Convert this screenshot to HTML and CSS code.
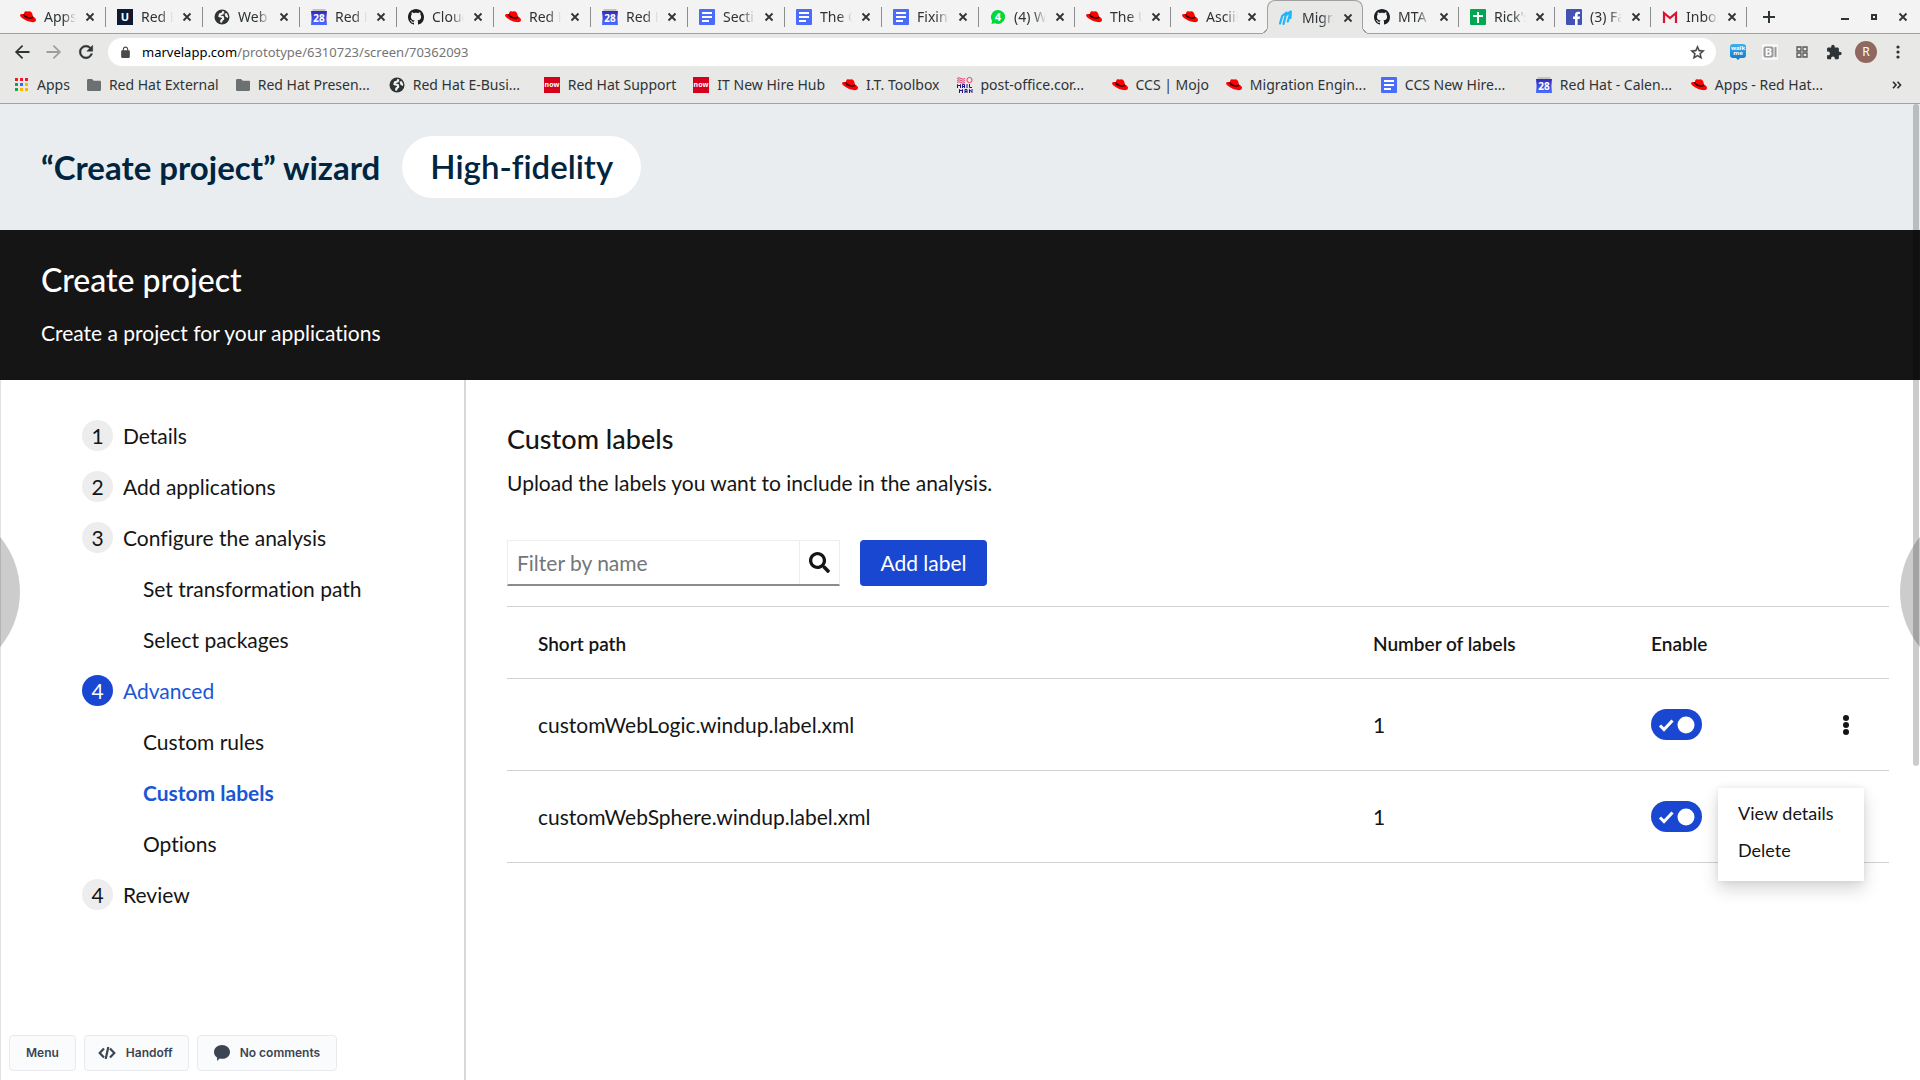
FILE: index.html
```html
<!DOCTYPE html>
<html lang="en">
<head>
<meta charset="utf-8">
<meta name="viewport" content="width=device-width, initial-scale=1">
<title>Create project wizard</title>
<link rel="stylesheet" href="styles.css">
</head>
<body>
<svg class="sprite" aria-hidden="true">
  <defs>
    <linearGradient id="cal-fill" x1="0" y1="0" x2="0" y2="1"><stop offset="0" stop-color="#3529b8"/><stop offset="1" stop-color="#4c6dff"/></linearGradient>
    <linearGradient id="walk-fill" x1="0" y1="0" x2="0" y2="1"><stop offset="0" stop-color="#3fb0ea"/><stop offset="1" stop-color="#0b78cc"/></linearGradient>
  </defs>
  <symbol id="hat" viewBox="0 0 16 16">
    <path fill="#f00" d="M4.300 3.400C4.700 2.200 6 1.900 7 2.400c.6.300 1.100 0 2-.1 1.700-.1 2.800.9 3.200 2.300l.9 3.100c1.700.8 3 1.800 2.900 3.300-.1 2-2.300 2.500-4.600 2.100-3-.5-6.500-2-9-3.900C.9 8.100-.1 7 .1 6 .3 4.900 2 4.800 3.800 5z"/>
    <path fill="none" stroke="#160000" stroke-width="1.500" d="M3.700 5.400c.3 1.700 2.300 2.800 4.600 3.300 2.400.5 4.300.3 4.800-.9"/>
  </symbol>
  <symbol id="globe" viewBox="0 0 16 16">
    <circle cx="8" cy="8" r="7.500" fill="#2e3436"/>
    <path fill="none" stroke="#f3f3f3" stroke-width="2.200" stroke-linejoin="round" d="M9.500 2.200L8.500 4.500 6 5.200l-.6 2 3.400.8.400 2-1.700 1.300L7 13.500"/>
    <path fill="#f3f3f3" d="M10.500 4.500l2.300-.3 1.400 3.300-.4 1.500-2.300-1.300z"/>
  </symbol>
  <symbol id="cal" viewBox="0 0 16 16">
    <path fill="#c4c4c4" d="M1.500 0h13v4h-13z"/><path fill="url(#cal-fill)" d="M0 2h16l-.6 7 .6 7H0l.6-7z"/>
    <text x="8" y="12.500" text-anchor="middle" fill="#fff" font-family="Noto Sans, sans-serif" font-weight="700" font-size="10">28</text>
  </symbol>
  <symbol id="docs" viewBox="0 0 16 16">
    <rect width="16" height="16" rx="1" fill="#4b6bfb"/><path fill="#fff" d="M3 3h10v2H3zM3 7h10v2H3zM3 11h7v2H3z"/>
  </symbol>
  <symbol id="github" viewBox="0 0 16 16">
    <path fill="#1b1f23" d="M8 0C3.580 0 0 3.580 0 8c0 3.540 2.290 6.530 5.470 7.590.4.070.55-.17.55-.38 0-.19-.01-.82-.01-1.490-2.010.37-2.530-.49-2.690-.94-.09-.23-.48-.94-.82-1.130-.28-.15-.68-.52-.01-.53.63-.01 1.080.58 1.230.82.72 1.210 1.870.87 2.330.66.07-.52.28-.87.51-1.070-1.780-.2-3.640-.89-3.640-3.950 0-.87.31-1.590.82-2.150-.08-.2-.36-1.020.08-2.120 0 0 .67-.21 2.200.82.64-.18 1.320-.27 2-.27s1.360.09 2 .27c1.530-1.040 2.200-.82 2.200-.82.44 1.100.16 1.920.08 2.120.51.56.82 1.270.82 2.150 0 3.070-1.870 3.750-3.650 3.950.29.25.54.73.54 1.480 0 1.070-.01 1.930-.01 2.200 0 .21.15.46.55.38A8.010 8.010 0 0 0 16 8c0-4.420-3.580-8-8-8z"/>
  </symbol>
  <symbol id="now" viewBox="0 0 16 16">
    <rect width="16" height="16" fill="#d6001c"/>
    <text x="8" y="10" text-anchor="middle" fill="#fff" font-family="Noto Sans, sans-serif" font-weight="700" font-size="7">now</text>
  </symbol>
  <symbol id="folder" viewBox="0 0 14 12">
    <path fill="#6b7072" d="M0 1.500C0 .7.500 0 1.300 0H5l1.800 1.800h6c.7 0 1.200.5 1.200 1.200v7.500c0 .8-.5 1.500-1.300 1.500H1.300C.5 12 0 11.300 0 10.500z"/>
  </symbol>
  <symbol id="x" viewBox="0 0 10 10"><path d="M1.500 1.500l7 7M8.500 1.500l-7 7" stroke="#2e3436" stroke-width="1.800"/></symbol>
  <symbol id="arrow" viewBox="0 0 24 24"><path fill="currentColor" d="M21 10.900H7.500L13.400 5 12 3.500 3.500 12l8.500 8.500 1.400-1.500-5.900-5.900H21z"/></symbol>
</svg>

<header class="browser">
  <div class="tabs">
    <div class="tab"><svg class="ico"><use href="#hat"/></svg><span class="tab-title">Apps</span><button class="close" aria-label="Close tab"><svg><use href="#x"/></svg></button></div>
    <div class="tab"><svg class="ico" viewBox="0 0 16 16"><rect width="16" height="16" fill="#0e1a33"/><text class="mark" x="8" y="12">U</text></svg><span class="tab-title">Red H</span><button class="close" aria-label="Close tab"><svg><use href="#x"/></svg></button></div>
    <div class="tab"><svg class="ico"><use href="#globe"/></svg><span class="tab-title">Web</span><button class="close" aria-label="Close tab"><svg><use href="#x"/></svg></button></div>
    <div class="tab"><svg class="ico"><use href="#cal"/></svg><span class="tab-title">Red H</span><button class="close" aria-label="Close tab"><svg><use href="#x"/></svg></button></div>
    <div class="tab"><svg class="ico"><use href="#github"/></svg><span class="tab-title">Cloud</span><button class="close" aria-label="Close tab"><svg><use href="#x"/></svg></button></div>
    <div class="tab"><svg class="ico"><use href="#hat"/></svg><span class="tab-title">Red H</span><button class="close" aria-label="Close tab"><svg><use href="#x"/></svg></button></div>
    <div class="tab"><svg class="ico"><use href="#cal"/></svg><span class="tab-title">Red H</span><button class="close" aria-label="Close tab"><svg><use href="#x"/></svg></button></div>
    <div class="tab"><svg class="ico"><use href="#docs"/></svg><span class="tab-title">Secti</span><button class="close" aria-label="Close tab"><svg><use href="#x"/></svg></button></div>
    <div class="tab"><svg class="ico"><use href="#docs"/></svg><span class="tab-title">The C</span><button class="close" aria-label="Close tab"><svg><use href="#x"/></svg></button></div>
    <div class="tab"><svg class="ico"><use href="#docs"/></svg><span class="tab-title">Fixing</span><button class="close" aria-label="Close tab"><svg><use href="#x"/></svg></button></div>
    <div class="tab slim"><svg class="ico" viewBox="0 0 16 16"><path fill="#00d93a" d="M8 1a7 7 0 1 1-3 13.300L1.500 15l.6-3.200A7 7 0 0 1 8 1z"/><text class="mark" x="8" y="12">4</text></svg><span class="tab-title">(4) W</span><button class="close" aria-label="Close tab"><svg><use href="#x"/></svg></button></div>
    <div class="tab slim"><svg class="ico"><use href="#hat"/></svg><span class="tab-title">The U</span><button class="close" aria-label="Close tab"><svg><use href="#x"/></svg></button></div>
    <div class="tab slim last"><svg class="ico"><use href="#hat"/></svg><span class="tab-title">AsciiD</span><button class="close" aria-label="Close tab"><svg><use href="#x"/></svg></button></div>
    <div class="tab slim active"><svg class="ico" viewBox="0 0 16 16"><path fill="none" stroke="#1fb6ff" stroke-width="2.200" stroke-linecap="round" stroke-linejoin="round" d="M2 13.500L4.200 6M5.500 14L8.500 2.500 4.200 6M9.800 11.500L12.800 1.500 8 5M12.800 1.500L12.500 8"/></svg><span class="tab-title">Migra</span><button class="close" aria-label="Close tab"><svg><use href="#x"/></svg></button></div>
    <div class="tab slim"><svg class="ico"><use href="#github"/></svg><span class="tab-title">MTA</span><button class="close" aria-label="Close tab"><svg><use href="#x"/></svg></button></div>
    <div class="tab slim"><svg class="ico" viewBox="0 0 16 16"><rect width="16" height="16" rx="1" fill="#00a651"/><path fill="#fff" d="M3 6h10v2H9v6H7V8H3zM7 3h2v4H7z"/></svg><span class="tab-title">Rick's</span><button class="close" aria-label="Close tab"><svg><use href="#x"/></svg></button></div>
    <div class="tab slim"><svg class="ico" viewBox="0 0 16 16"><rect width="16" height="16" rx="1" fill="#4353b3"/><path fill="#fff" d="M9 16v-6H7V7.500h2V6c0-2.200 1.200-3.300 3.200-3.300H14v2.400h-1.200c-.9 0-1.200.4-1.200 1.200v1.200H14L13.600 10h-2v6z"/></svg><span class="tab-title">(3) Fa</span><button class="close" aria-label="Close tab"><svg><use href="#x"/></svg></button></div>
    <div class="tab slim"><svg class="ico" viewBox="0 0 16 16"><path fill="#f2f2f2" d="M2 3h12v11H2z"/><path fill="none" stroke="#d9102f" stroke-width="2.200" d="M2 14V4l6 5 6-5v10"/></svg><span class="tab-title">Inbox</span><button class="close" aria-label="Close tab"><svg><use href="#x"/></svg></button></div>
    <button class="new-tab" aria-label="New tab"><svg viewBox="0 0 12 12"><path d="M6 0v12M0 6h12" stroke="#2e3436" stroke-width="2"/></svg></button>
    <div class="window-buttons">
      <button aria-label="Minimize"><svg viewBox="0 0 10 10"><path fill="#2e3436" d="M1 6h8v2H1z"/></svg></button>
      <button aria-label="Restore"><svg viewBox="0 0 10 10"><path fill="none" stroke="#2e3436" stroke-width="2" d="M3 3h4v4H3z"/></svg></button>
      <button aria-label="Close"><svg><use href="#x"/></svg></button>
    </div>
  </div>

  <div class="toolbar">
    <button class="tool" aria-label="Back"><svg class="nav-ico"><use href="#arrow"/></svg></button>
    <button class="tool forward" aria-label="Forward"><svg class="nav-ico"><use href="#arrow"/></svg></button>
    <button class="tool" aria-label="Reload"><svg class="nav-ico" viewBox="0 0 24 24"><path fill="currentColor" d="M17.650 6.350C16.200 4.900 14.210 4 12 4c-4.420 0-7.990 3.580-7.990 8s3.570 8 7.990 8c3.730 0 6.840-2.550 7.730-6h-2.080c-.82 2.330-3.040 4-5.650 4-3.310 0-6-2.690-6-6s2.690-6 6-6c1.660 0 3.140.69 4.220 1.780L13 11h7V4z" stroke="currentColor" stroke-width=".6"/></svg></button>
    <div class="omnibox">
      <svg class="lock" viewBox="0 0 24 24"><path fill="#4a4a4a" d="M18 8h-1V6c0-2.760-2.240-5-5-5S7 3.240 7 6v2H6c-1.100 0-2 .9-2 2v10c0 1.100.9 2 2 2h12c1.100 0 2-.9 2-2V10c0-1.100-.9-2-2-2zM9 8V6a3 3 0 0 1 6 0v2z"/></svg>
      <a class="url" href="#"><span class="host">marvelapp.com</span>/prototype/6310723/screen/70362093</a>
      <svg class="star" viewBox="0 0 24 24"><path fill="#3c4043" stroke="#3c4043" stroke-width=".5" d="M22 9.240l-7.190-.62L12 2 9.190 8.630 2 9.240l5.460 4.730L5.820 21 12 17.270 18.180 21l-1.630-7.030zM12 15.400l-3.760 2.270 1-4.280-3.320-2.880 4.380-.38L12 6.100l1.710 4.040 4.380.38-3.320 2.880 1 4.280z"/></svg>
    </div>
    <button class="tool" aria-label="WalkMe"><svg class="ico" viewBox="0 0 16 16"><path fill="url(#walk-fill)" d="M3 0h10a3 3 0 0 1 3 3v8a3 3 0 0 1-3 3h-3l-2 2-2-2H3a3 3 0 0 1-3-3V3a3 3 0 0 1 3-3z"/><text class="tiny" x="8" y="6">walk</text><text class="tiny" x="8" y="11">me</text></svg></button>
    <button class="tool" aria-label="B extension"><svg class="ico" viewBox="0 0 16 16"><path fill="#f7f7f7" d="M0 0h16v16H0z"/><rect x="1.500" y="2.500" width="10" height="11" rx="2" fill="#999"/><path fill="#999" d="M12.500 3h2v10h-2z"/><text class="mark" x="6.500" y="12">B</text></svg></button>
    <button class="tool" aria-label="Grid extension"><svg class="grid-ico" viewBox="0 0 12 12"><path fill="none" stroke="#555" stroke-width="1.300" d="M1 1h4v4H1zM7 1h4v4H7zM1 7h4v4H1zM7 7h4v4H7z"/></svg></button>
    <button class="tool" aria-label="Extensions"><svg class="ico" viewBox="1 0 22 23"><path fill="#2e3436" d="M20.500 11H19V7c0-1.100-.9-2-2-2h-4V3.500a2.500 2.500 0 0 0-5 0V5H4c-1.100 0-2 .9-2 2v3.800h1.500a2.700 2.700 0 0 1 0 5.400H2V20c0 1.100.9 2 2 2h3.800v-1.500a2.700 2.700 0 0 1 5.400 0V22H17c1.100 0 2-.9 2-2v-4h1.500a2.500 2.500 0 0 0 0-5z"/></svg></button>
    <button class="tool" aria-label="Profile"><span class="avatar">R</span></button>
    <button class="tool" aria-label="Browser menu"><svg class="ico" viewBox="0 0 16 16"><g fill="#2e3436"><circle cx="8" cy="3" r="1.600"/><circle cx="8" cy="8" r="1.600"/><circle cx="8" cy="13" r="1.600"/></g></svg></button>
  </div>

  <nav class="bookmarks" aria-label="Bookmarks">
    <a href="#"><svg class="apps-ico" viewBox="0 0 13 13"><path fill="#ea1c2c" d="M0 0h3v3H0zM5 0h3v3H5zM10 0h3v3h-3z"/><path fill="#16a34a" d="M0 5h3v3H0zM0 10h3v3H0z"/><path fill="#2f6bff" d="M5 5h3v3H5z"/><path fill="#fbb400" d="M10 5h3v3h-3zM5 10h3v3H5zM10 10h3v3h-3z"/></svg><span>Apps</span></a>
    <a href="#"><svg class="folder-ico"><use href="#folder"/></svg><span>Red Hat External</span></a>
    <a href="#"><svg class="folder-ico"><use href="#folder"/></svg><span class="cut">Red Hat Presen...</span></a>
    <a href="#"><svg class="ico"><use href="#globe"/></svg><span class="cut">Red Hat E-Busi...</span></a>
    <a href="#"><svg class="ico"><use href="#now"/></svg><span>Red Hat Support</span></a>
    <a href="#"><svg class="ico"><use href="#now"/></svg><span>IT New Hire Hub</span></a>
    <a href="#"><svg class="ico"><use href="#hat"/></svg><span>I.T. Toolbox</span></a>
    <a href="#"><svg class="ico" viewBox="0 0 16 16"><path fill="none" stroke="#f0386b" d="M0 1.500q2-1.500 4 0t4 0M0 3.500q2-1.500 4 0t4 0M0 5.500q2-1.500 4 0t4 0"/><circle cx="12.500" cy="3" r="2.600" fill="none" stroke="#f0386b"/><path fill="none" stroke="#20108a" stroke-width="1" d="M.5 11V7.500L2 9l1.500-1.500V11M5.500 11V7.500h2V11M5.500 9.500h2M10 7v4M12.500 7v3.500H15M2.500 16v-3.500L4 14l1.500-1.500V16M8 16v-3.500h2V16M8 14.500h2M12.500 16v-3.500l2.500 3V12"/></svg><span class="cut">post-office.cor...</span></a>
    <a href="#"><svg class="ico"><use href="#hat"/></svg><span>CCS | Mojo</span></a>
    <a href="#"><svg class="ico"><use href="#hat"/></svg><span class="cut">Migration Engin...</span></a>
    <a href="#"><svg class="ico"><use href="#docs"/></svg><span class="cut">CCS New Hire...</span></a>
    <a href="#"><svg class="ico"><use href="#cal"/></svg><span class="cut">Red Hat - Calen...</span></a>
    <a href="#"><svg class="ico"><use href="#hat"/></svg><span class="cut">Apps - Red Hat...</span></a>
    <button class="more" aria-label="More bookmarks"><svg viewBox="0 0 10 8"><path fill="none" stroke="#2e3436" stroke-width="1.700" d="M1 .7L4 4 1 7.300M5.500.7l3 3.300-3 3.300"/></svg></button>
  </nav>
</header>

<div class="screen">
  <div class="prototype-bar">
    <h1>“Create project” wizard</h1>
    <span class="pill">High-fidelity</span>
  </div>
  <div class="masthead">
    <h2>Create project</h2>
    <p>Create a project for your applications</p>
  </div>
  <div class="wizard">
    <nav class="steps" aria-label="Wizard steps">
      <a href="#"><span class="num">1</span>Details</a>
      <a href="#"><span class="num">2</span>Add applications</a>
      <a href="#"><span class="num">3</span>Configure the analysis</a>
      <a class="sub" href="#">Set transformation path</a>
      <a class="sub" href="#">Select packages</a>
      <a class="current" href="#"><span class="num">4</span>Advanced</a>
      <a class="sub" href="#">Custom rules</a>
      <a class="sub current strong" href="#">Custom labels</a>
      <a class="sub" href="#">Options</a>
      <a href="#"><span class="num">4</span>Review</a>
    </nav>
    <main class="content">
      <h3>Custom labels</h3>
      <p class="lead">Upload the labels you want to include in the analysis.</p>
      <div class="actions">
        <div class="search">
          <input type="text" placeholder="Filter by name" aria-label="Filter by name">
          <button aria-label="Search"><svg viewBox="0 0 512 512"><path fill="#151515" d="M505 442.700L405.300 343c-4.500-4.500-10.600-7-17-7H372c27.600-35.300 44-79.700 44-128C416 93.100 322.900 0 208 0S0 93.100 0 208s93.100 208 208 208c48.300 0 92.700-16.400 128-44v16.300c0 6.400 2.500 12.500 7 17l99.700 99.700c9.400 9.400 24.600 9.400 33.900 0l28.300-28.300c9.400-9.400 9.400-24.600.1-34zM208 336c-70.700 0-128-57.200-128-128 0-70.700 57.200-128 128-128 70.700 0 128 57.200 128 128 0 70.700-57.200 128-128 128z"/></svg></button>
        </div>
        <button class="primary">Add label</button>
      </div>
      <table>
        <colgroup><col><col class="c-count"><col class="c-enable"><col class="c-actions"></colgroup>
        <thead><tr><th scope="col">Short path</th><th scope="col">Number of labels</th><th scope="col">Enable</th><td></td></tr></thead>
        <tbody>
          <tr>
            <td>customWebLogic.windup.label.xml</td><td>1</td>
            <td><label class="toggle"><input type="checkbox" checked aria-label="Enable customWebLogic.windup.label.xml"><svg viewBox="0 0 51 31"><path d="M9 16.500l4 4 8.500-9" fill="none" stroke="#fff" stroke-width="3"/><circle cx="35" cy="16" r="8.500" fill="#fff"/></svg></label></td>
            <td class="kebab-cell"><div class="kebab">
              <button aria-label="Actions"><svg viewBox="0 0 6 20"><g fill="#151515"><circle cx="3" cy="3" r="3"/><circle cx="3" cy="10" r="3"/><circle cx="3" cy="17" r="3"/></g></svg></button>
              <div class="menu"><button>View details</button><button>Delete</button></div>
            </div></td>
          </tr>
          <tr>
            <td>customWebSphere.windup.label.xml</td><td>1</td>
            <td><label class="toggle"><input type="checkbox" checked aria-label="Enable customWebSphere.windup.label.xml"><svg viewBox="0 0 51 31"><path d="M9 16.500l4 4 8.500-9" fill="none" stroke="#fff" stroke-width="3"/><circle cx="35" cy="16" r="8.500" fill="#fff"/></svg></label></td>
            <td></td>
          </tr>
        </tbody>
      </table>
    </main>
  </div>

  <button class="pager prev" aria-label="Previous screen"></button>
  <button class="pager next" aria-label="Next screen"></button>
  <div class="scroll-thumb"></div>
  <div class="viewer-bar">
    <button>Menu</button>
    <button class="handoff"><svg class="code-ico" viewBox="0 0 18 12"><path fill="none" stroke="#3b4554" stroke-width="2.200" d="M6 1.500L1.700 6 6 10.500M12 1.500L16.300 6 12 10.500M10.300 0L7.700 12"/></svg>Handoff</button>
    <button class="comments"><svg class="ico" viewBox="0 0 16 16"><path fill="#3b4554" d="M8 0c4.400 0 8 2.900 8 6.900s-3.600 6.900-8 6.900c-.9 0-1.700-.1-2.400-.3L3 16l.2-3.600C1.200 11.200 0 9.200 0 6.900 0 2.900 3.600 0 8 0z"/></svg>No comments</button>
  </div>
</div>
</body>
</html>
```
FILE: styles.css
```css
* { box-sizing: border-box; }

body {
  margin: 0;
  min-height: 100vh;
  display: flex;
  flex-direction: column;
  font-family: Lato, "Open Sans", sans-serif;
  font-size: 21px;
  font-variant-ligatures: none;
  line-height: 26px;
  color: #151515;
  background: #fff;
}

h1, h2, h3, p { margin: 0; }
a { color: inherit; text-decoration: none; }
button {
  border: 0;
  padding: 0;
  background: none;
  color: inherit;
  font: inherit;
  cursor: pointer;
}
svg { display: block; flex: none; }

.sprite { position: absolute; width: 0; height: 0; }
.ico { width: 16px; height: 16px; }
.mark {
  fill: #fff;
  font: 700 11px "Noto Sans", sans-serif;
  text-anchor: middle;
}
.tiny {
  fill: #fff;
  font: 700 6px "Noto Sans", sans-serif;
  text-anchor: middle;
}

/* Browser window */
.browser {
  background: #e8e8e7;
  border-bottom: 1px solid #a3a3a3;
  color: #2e3436;
  font: 14px/20px "Noto Sans", sans-serif;
}

.tabs {
  display: flex;
  height: 34px;
  padding-left: 9px;
  background: #f3f3f3;
  border-bottom: 1px solid #a0a0a0;
}
.tab {
  position: relative;
  flex: none;
  display: flex;
  align-items: center;
  width: 97px;
  padding-left: 11px;
}
.tab.slim { width: 96px; }
.tab:not(.active):not(.last)::after {
  content: "";
  position: absolute;
  right: 0;
  top: 7px;
  width: 1px;
  height: 20px;
  background: #8c8c8c;
}
.tab-title {
  width: 32px;
  margin-left: 8px;
  white-space: nowrap;
  -webkit-mask-image: linear-gradient(to right, #000 60%, transparent);
  mask-image: linear-gradient(to right, #000 60%, transparent);
}
.close {
  display: grid;
  place-items: center;
  width: 16px;
  height: 16px;
  margin-left: 6px;
}
.close svg, .window-buttons svg { width: 10px; height: 10px; }
.tab.active {
  margin-bottom: -1px;
  padding-left: 10px;
  background: #e8e8e7;
  border: 1px solid #a0a0a0;
  border-bottom: 0;
  border-radius: 8px 8px 0 0;
}
.tab.active::before, .tab.active::after {
  content: "";
  position: absolute;
  bottom: 0;
  width: 8px;
  height: 8px;
}
.tab.active::before {
  right: 100%;
  background: radial-gradient(circle at 0 0, #f3f3f3 7px, #a0a0a0 7px 8px, #e8e8e7 8px);
}
.tab.active::after {
  left: 100%;
  background: radial-gradient(circle at 100% 0, #f3f3f3 7px, #a0a0a0 7px 8px, #e8e8e7 8px);
}
.new-tab {
  display: grid;
  place-items: center;
  width: 44px;
}
.new-tab svg { width: 12px; height: 12px; }
.window-buttons {
  display: flex;
  margin-left: auto;
  padding-right: 3px;
}
.window-buttons button {
  display: grid;
  place-items: center;
  width: 29px;
}

.toolbar {
  display: flex;
  align-items: center;
  padding: 4px 6px;
}
.tool {
  display: grid;
  place-items: center;
  width: 32px;
  height: 28px;
}
.forward { color: #9d9d9c; }
.forward svg { transform: scaleX(-1); }
.nav-ico { width: 20px; height: 20px; }
.grid-ico { width: 12px; height: 12px; }
.omnibox {
  flex: 1;
  display: flex;
  align-items: center;
  height: 28px;
  margin: 0 6px;
  padding: 0 10px 0 11px;
  border-radius: 14px;
  background: #fff;
}
.lock { width: 13px; height: 13px; }
.url {
  flex: 1;
  margin-left: 10px;
  font-size: 13px;
  color: #757575;
}
.host { color: #000; }
.star { width: 17px; height: 17px; }
.avatar {
  width: 22px;
  height: 22px;
  border-radius: 50%;
  background: #906860;
  color: #fff;
  font-size: 12px;
  line-height: 22px;
}

.bookmarks {
  display: flex;
  align-items: center;
  gap: 17px;
  height: 33px;
  padding: 0 18px 4px 15px;
}
.bookmarks a {
  display: flex;
  align-items: center;
  gap: 8px;
  height: 28px;
  white-space: nowrap;
}
.bookmarks .cut { width: 114px; }
.apps-ico { width: 13px; height: 13px; margin-right: 1px; }
.folder-ico { width: 14px; height: 12px; }
.more { margin-left: auto; }
.more svg { width: 10px; height: 8px; }

/* Prototype screen */
.screen {
  position: relative;
  flex: 1;
  display: flex;
  flex-direction: column;
  overflow: hidden;
}
.prototype-bar {
  display: flex;
  align-items: center;
  gap: 22px;
  padding: 32px 41px;
  background: #e9edf0;
  color: #002540;
}
h1 {
  font-size: 33px;
  font-weight: 700;
  line-height: 40px;
}
.pill {
  padding: 10px 28px 12px;
  border-radius: 31px;
  background: #fff;
  font-size: 33px;
  font-weight: 600;
  line-height: 40px;
}
.masthead {
  padding: 30px 41px 34px;
  background: #151515;
  color: #fff;
}
h2 {
  font-size: 32px;
  font-weight: 500;
  line-height: 40px;
}
.masthead p { margin-top: 20px; }

.wizard {
  flex: 1;
  display: flex;
}
.steps {
  flex: none;
  display: flex;
  flex-direction: column;
  width: 466px;
  padding: 30px 0 80px 81px;
  border-right: 2px solid #d8d8d8;
  border-left: 1px solid #e2e2e2;
}
.steps a {
  display: flex;
  align-items: center;
  gap: 10px;
  height: 51px;
}
.steps .sub { padding-left: 61px; }
.num {
  width: 31px;
  height: 31px;
  border-radius: 50%;
  background: #ededed;
  line-height: 31px;
  text-align: center;
}
.steps .current { color: #1a56d6; }
.steps .strong { font-weight: 700; }
.current .num { background: #1947d1; color: #fff; }

.content {
  flex: 1;
  padding: 42px 31px 80px 41px;
}
h3 {
  font-size: 27px;
  font-weight: 500;
  line-height: 34px;
}
.lead { margin-top: 14px; }
.actions {
  display: flex;
  gap: 20px;
  margin-top: 44px;
}
.search {
  display: flex;
  width: 333px;
  height: 46px;
  border: 1px solid #ededed;
  border-bottom: 2px solid #8a8d90;
}
.search input {
  flex: 1;
  min-width: 0;
  border: 0;
  padding: 0 9px;
  background: none;
  font: inherit;
}
.search input::placeholder { color: #737679; opacity: 1; }
.search button {
  display: grid;
  place-items: center;
  width: 40px;
  border-left: 1px solid #ededed;
}
.search svg { width: 21px; height: 21px; }
.primary {
  width: 127px;
  border-radius: 4px;
  background: #1947d1;
  color: #fff;
}

table {
  width: 100%;
  margin-top: 20px;
  border-top: 1px solid #d2d2d2;
  border-collapse: separate;
  border-spacing: 0;
  table-layout: fixed;
}
.c-count { width: 278px; }
.c-enable { width: 160px; }
.c-actions { width: 109px; }
th, td {
  height: 92px;
  padding: 0 0 0 31px;
  border-bottom: 1px solid #d2d2d2;
  text-align: left;
}
thead th, thead td { height: 72px; }
th {
  padding-top: 2px;
  font-size: 19px;
  font-weight: 600;
  white-space: nowrap;
}
.toggle {
  display: grid;
  width: 51px;
  height: 31px;
}
.toggle input, .toggle svg { grid-area: 1 / 1; }
.toggle input {
  appearance: none;
  width: 51px;
  height: 31px;
  margin: 0;
  border-radius: 16px;
  background: #8a8d90;
}
.toggle input:checked { background: #1947d1; }
.toggle svg { z-index: 1; width: 51px; height: 31px; pointer-events: none; }
.kebab-cell { padding-right: 25px; }
.kebab {
  position: relative;
  width: 36px;
  height: 36px;
  margin-left: auto;
}
.kebab > button {
  display: grid;
  place-items: center;
  width: 36px;
  height: 36px;
}
.kebab > button svg { width: 6px; height: 20px; }
.menu {
  position: absolute;
  z-index: 2;
  top: 81px;
  right: 0;
  display: flex;
  flex-direction: column;
  width: 146px;
  padding: 7px 0 12px;
  background: #fff;
  box-shadow: 0 8px 16px rgba(3, 3, 3, .16), 0 0 6px rgba(3, 3, 3, .08);
}
.menu button {
  height: 37px;
  padding-left: 20px;
  font-size: 18px;
  text-align: left;
}

/* Viewer controls floating over the prototype */
.pager {
  position: absolute;
  top: 402px;
  width: 172px;
  height: 172px;
  border-radius: 50%;
  background: rgba(0, 0, 0, .2);
}
.prev { left: -152px; }
.next { right: -152px; }
.scroll-thumb {
  position: absolute;
  top: 0;
  right: 1px;
  width: 6px;
  height: 662px;
  border-radius: 3px;
  background: rgba(0, 0, 0, .2);
}
.viewer-bar {
  position: absolute;
  left: 9px;
  bottom: 9px;
  display: flex;
  gap: 8px;
}
.viewer-bar button {
  display: flex;
  align-items: center;
  height: 36px;
  padding: 0 16px;
  border: 1px solid #e8eaed;
  border-radius: 4px;
  background: #fafbfc;
  color: #3b4554;
  font: 600 12px/16px Inter, sans-serif;
}
.viewer-bar .handoff { gap: 10px; padding: 0 15px 0 13px; }
.viewer-bar .comments { gap: 10px; }
.code-ico { width: 18px; height: 12px; }
```
